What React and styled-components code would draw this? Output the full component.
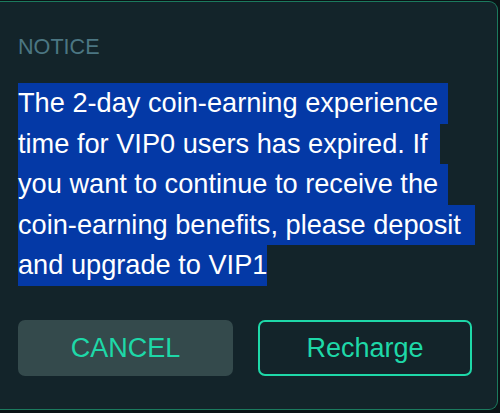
import React from "react";
import styled, { createGlobalStyle } from "styled-components";

const Global = createGlobalStyle`
  html, body { margin: 0; padding: 0; background: #0b1316; }
  body { font-family: "Liberation Sans", Arial, sans-serif; }
`;

const Page = styled.div`
  width: 500px;
  height: 413px;
  padding-top: 1px;
  box-sizing: border-box;
  background: #0b1316;
`;

const Dialog = styled.section`
  width: 498px;
  box-sizing: border-box;
  background: #13242a;
  border: 1px solid #1b7a5e;
  border-left: none;
  border-radius: 0 9px 9px 0;
  padding: 32px 25px 33px 18px;
  display: flex;
  flex-direction: column;
`;

const Title = styled.h2`
  margin: 0;
  font-size: 21.6px;
  line-height: 25px;
  font-weight: 400;
  color: #4b7682;
`;

const Message = styled.div`
  margin-top: 24px;
  font-size: 27.2px;
  line-height: 40.5px;
  color: #ffffff;
  display: flex;
  flex-direction: column;
  align-items: flex-start;
`;

const Line = styled.span`
  display: block;
  white-space: pre;
  background: #0439a6;
  color: #ffffff;
  padding-right: ${(p) => p.$extra || 0}px;
`;

const Actions = styled.div`
  margin-top: 34.5px;
  display: grid;
  grid-template-columns: 215px 214px;
  column-gap: 25px;
`;

const Button = styled.button`
  height: 56px;
  box-sizing: border-box;
  border-radius: 7px;
  font-family: "Liberation Sans", Arial, sans-serif;
  font-size: 27px;
  color: #1ed8a8;
  cursor: pointer;
  padding: 0;
  background: ${(p) => (p.$variant === "ghost" ? "#344a4c" : "transparent")};
  border: ${(p) => (p.$variant === "ghost" ? "none" : "2.5px solid #1ed8a8")};
`;

const lines = [
  { text: "The 2-day coin-earning experience ", extra: 2 },
  { text: "time for VIP0 users has expired. If ", extra: 5 },
  { text: "you want to continue to receive the ", extra: 2 },
  { text: "coin-earning benefits, please deposit ", extra: 7 },
  { text: "and upgrade to VIP1", extra: 0 },
];

export default function App() {
  return (
    <Page>
      <Global />
      <Dialog>
        <Title>NOTICE</Title>
        <Message>
          {lines.map((l, i) => (
            <Line key={i} $extra={l.extra}>
              {l.text}
            </Line>
          ))}
        </Message>
        <Actions>
          <Button $variant="ghost">CANCEL</Button>
          <Button $variant="outline">Recharge</Button>
        </Actions>
      </Dialog>
    </Page>
  );
}
